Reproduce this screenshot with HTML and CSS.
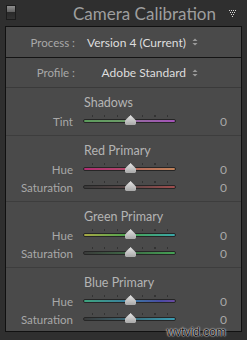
FILE: index.html
```html
<!DOCTYPE html>
<html lang="en">
<head>
  <meta charset="UTF-8" />
  <meta name="viewport" content="width=device-width, initial-scale=1.0" />
  <title>Camera Calibration</title>
  <link rel="stylesheet" href="styles.css">
</head>
<body>
  <div class="panel-head">
    <span class="toggle"></span>
    <span class="head-title">Camera Calibration</span>
    <svg class="collapse" width="8" height="8" viewBox="0 0 8 8">
      <g fill="#d8d8d8">
        <rect x="0" y="0" width="1" height="1"/><rect x="2" y="0" width="1" height="1"/><rect x="4" y="0" width="1" height="1"/><rect x="6" y="0" width="1" height="1"/>
        <rect x="1" y="2" width="1" height="1"/><rect x="3" y="2" width="1" height="1"/><rect x="5" y="2" width="1" height="1"/>
        <rect x="2" y="4" width="1" height="1"/><rect x="4" y="4" width="1" height="1"/>
        <rect x="3" y="6" width="1" height="1"/>
      </g>
    </svg>
  </div>

  <div class="panel">
    <div class="select-row first">
      <span class="sel-label">Process :</span>
      <span class="sel-value">Version 4 (Current)</span>
      <svg class="updown" width="6" height="8" viewBox="0 0 6 8"><path d="M0.5 3 L3 0.5 L5.5 3 Z M0.5 5 L3 7.5 L5.5 5 Z" fill="#9a9a9a"/></svg>
    </div>
    <div class="select-row">
      <span class="sel-label">Profile :</span>
      <span class="sel-value">Adobe Standard</span>
      <svg class="updown" width="6" height="8" viewBox="0 0 6 8"><path d="M0.5 3 L3 0.5 L5.5 3 Z M0.5 5 L3 7.5 L5.5 5 Z" fill="#9a9a9a"/></svg>
    </div>

    <div class="group">
      <div class="group-title">Shadows</div>
      <div class="slider-row">
        <span class="s-label">Tint</span>
        <div class="slider"><div class="ticks"></div><div class="track tint"></div><span class="thumb"></span></div>
        <span class="s-value">0</span>
      </div>
    </div>

    <div class="group">
      <div class="group-title">Red Primary</div>
      <div class="slider-row">
        <span class="s-label">Hue</span>
        <div class="slider"><div class="ticks"></div><div class="track red-hue"></div><span class="thumb"></span></div>
        <span class="s-value">0</span>
      </div>
      <div class="slider-row">
        <span class="s-label">Saturation</span>
        <div class="slider"><div class="ticks"></div><div class="track red-sat"></div><span class="thumb"></span></div>
        <span class="s-value">0</span>
      </div>
    </div>

    <div class="group">
      <div class="group-title">Green Primary</div>
      <div class="slider-row">
        <span class="s-label">Hue</span>
        <div class="slider"><div class="ticks"></div><div class="track green-hue"></div><span class="thumb"></span></div>
        <span class="s-value">0</span>
      </div>
      <div class="slider-row">
        <span class="s-label">Saturation</span>
        <div class="slider"><div class="ticks"></div><div class="track green-sat"></div><span class="thumb"></span></div>
        <span class="s-value">0</span>
      </div>
    </div>

    <div class="group">
      <div class="group-title">Blue Primary</div>
      <div class="slider-row">
        <span class="s-label">Hue</span>
        <div class="slider"><div class="ticks"></div><div class="track blue-hue"></div><span class="thumb"></span></div>
        <span class="s-value">0</span>
      </div>
      <div class="slider-row">
        <span class="s-label">Saturation</span>
        <div class="slider"><div class="ticks"></div><div class="track blue-sat"></div><span class="thumb"></span></div>
        <span class="s-value">0</span>
      </div>
    </div>
  </div>

  <div class="watermark">wvtvid.com</div>
</body>
</html>
```

FILE: styles.css
```css
body {
  margin: 0;
  width: 247px;
  height: 340px;
  background: #2f2f2f;
  font-family: Lato, "Liberation Sans", sans-serif;
  position: relative;
  overflow: hidden;
}
.panel-head {
  height: 26px;
  display: flex;
  align-items: center;
  padding: 0 10px 0 6px;
}
.toggle {
  width: 8px;
  height: 13px;
  border: 1px solid #1c1c1c;
  background: linear-gradient(to bottom, #8e8e8e, #5c5c5c 50%, #2a2a2a 50%, #333 100%);
  margin-top: -1px;
}
.head-title {
  flex: 1;
  text-align: right;
  color: #9e9e9e;
  font-size: 17px;
  padding-right: 13px;
}
.collapse {
  margin-top: 1px;
}
.panel {
  margin: 0 5px;
  border: 1px solid #111;
  background: #4a4a4a;
}
.select-row {
  height: 29px;
  display: grid;
  grid-template-columns: 69px 117px 6px;
  align-items: center;
  border-bottom: 1px solid #3a3a3a;
}
.select-row.first {
  height: 30px;
  border-bottom-color: #141414;
}
.sel-label {
  text-align: right;
  color: #a8a8a8;
  font-size: 11.5px;
}
.sel-value {
  text-align: right;
  color: #dedede;
  font-size: 12px;
  margin-right: 6px;
}
.updown {
  display: block;
}
.group {
  padding: 6px 0 5px;
  border-bottom: 1px solid #3d3d3d;
}
.group:last-child {
  border-bottom: none;
  padding-bottom: 3px;
}
.group-title {
  height: 18px;
  line-height: 18px;
  padding-left: 78px;
  color: #b4b4b4;
  font-size: 12.5px;
}
.slider-row {
  height: 18px;
  display: grid;
  grid-template-columns: 67px 93px 41px;
  column-gap: 10px;
  align-items: center;
}
.s-label {
  text-align: right;
  color: #a8a8a8;
  font-size: 11.5px;
}
.s-value {
  text-align: right;
  color: #a8a8a8;
  font-size: 12px;
}
.slider {
  position: relative;
  height: 18px;
}
.ticks {
  position: absolute;
  left: 9px;
  width: 77px;
  top: 3px;
  height: 2px;
  background: repeating-linear-gradient(to right, #333 0, #333 1px, transparent 1px, transparent 12.5px);
}
.track {
  position: absolute;
  left: 0;
  right: 0;
  top: 7px;
  height: 2px;
  border: 1px solid #262626;
  border-radius: 3px;
}
.tint { background: linear-gradient(to right, #5c9c5c, #6c9a68 45%, #946aa0 55%, #a452b8); }
.red-hue { background: linear-gradient(to right, #b02e72, #b0486a 45%, #b86a5c 55%, #c0825a); }
.red-sat { background: linear-gradient(to right, #3a3a3a, #5a4646 50%, #a04e4e); }
.green-hue { background: linear-gradient(to right, #a8a844, #48a450 50%, #3aa6a8); }
.green-sat { background: linear-gradient(to right, #3a3a3a, #3e6a46 50%, #44a254); }
.blue-hue { background: linear-gradient(to right, #3ea47e, #3a7ca0 50%, #4a4aa4 85%, #6a4aa0); }
.blue-sat { background: linear-gradient(to right, #3a3a3a, #3a6a78 50%, #3a9cb2); }
.thumb {
  position: absolute;
  left: 42px;
  top: 3px;
  width: 11px;
  height: 10px;
  background: linear-gradient(to bottom, #e6e6e6, #a8a8a8);
  clip-path: polygon(50% 0, 100% 55%, 100% 90%, 90% 100%, 10% 100%, 0 90%, 0 55%);
}
.watermark {
  position: absolute;
  right: 21px;
  bottom: 1px;
  font-family: "Liberation Sans", sans-serif;
  font-size: 12px;
  line-height: 13px;
  color: #111;
  text-shadow: 0 0 2px #fff, 0 0 1px #fff;
}
```
